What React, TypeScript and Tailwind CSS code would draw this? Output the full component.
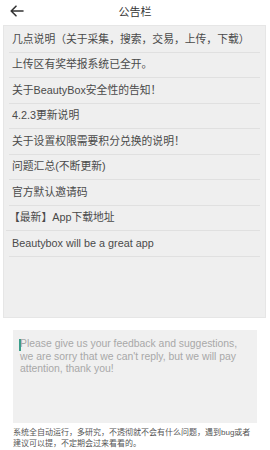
import React from "react";

const items = [
  "几点说明（关于采集，搜索，交易，上传，下载）",
  "上传区有奖举报系统已全开。",
  "关于BeautyBox安全性的告知！",
  "4.2.3更新说明",
  "关于设置权限需要积分兑换的说明！",
  "问题汇总(不断更新)",
  "官方默认邀请码",
  "【最新】App下载地址",
  "Beautybox will  be a great app",
];

export default function App() {
  return (
    <div
      className="w-[270px] h-[450px] bg-white overflow-hidden flex flex-col"
      style={{ fontFamily: '"Liberation Sans", "Noto Sans CJK SC", sans-serif' }}
    >
      <div className="h-[25px] flex items-center relative shrink-0">
        <svg
          className="absolute left-[10px] top-[5px]"
          width="14"
          height="12"
          viewBox="0 0 14 12"
          fill="none"
          stroke="#333"
          strokeWidth="1.6"
          strokeLinecap="round"
          strokeLinejoin="round"
        >
          <path d="M13 6H1.5M6 1.2L1.2 6 6 10.8" />
        </svg>
        <div className="w-full text-center text-[11px] text-[#333] leading-none">公告栏</div>
      </div>
      <div className="mx-[3px] w-[263px] h-[293px] bg-[#efefef] border border-[#e6e6e6] pt-[1px] shrink-0">
        {items.map((t, i) => (
          <div
            key={i}
            className="mx-[5px] h-[25.5px] flex items-center border-b border-[#e0e0e0] text-[10.8px] text-[#4a4a4a] whitespace-nowrap px-[3px] pb-[1px]"
            style={i === 7 ? { marginLeft: 2 } : undefined}
          >
            {t}
          </div>
        ))}
      </div>
      <div className="mx-[13px] mt-[12px] w-[244px] h-[93px] bg-[#f0f0f0] px-[7px] pt-[8px] shrink-0">
        <div className="relative text-[10.4px] leading-[12.5px] text-[#a8a8a8]">
          <span className="absolute -left-[1px] top-[1px] w-[1.5px] h-[12px] bg-[#3a9e8a]" />
          Please give us your feedback and suggestions, we are sorry that we can't reply, but we will pay attention, thank you!
        </div>
      </div>
      <div className="mx-[13px] mt-[4px] text-[8px] leading-[11px] text-[#555]">
        系统全自动运行，多研究，不透彻就不会有什么问题，遇到bug或者建议可以提，不定期会过来看看的。
      </div>
    </div>
  );
}
